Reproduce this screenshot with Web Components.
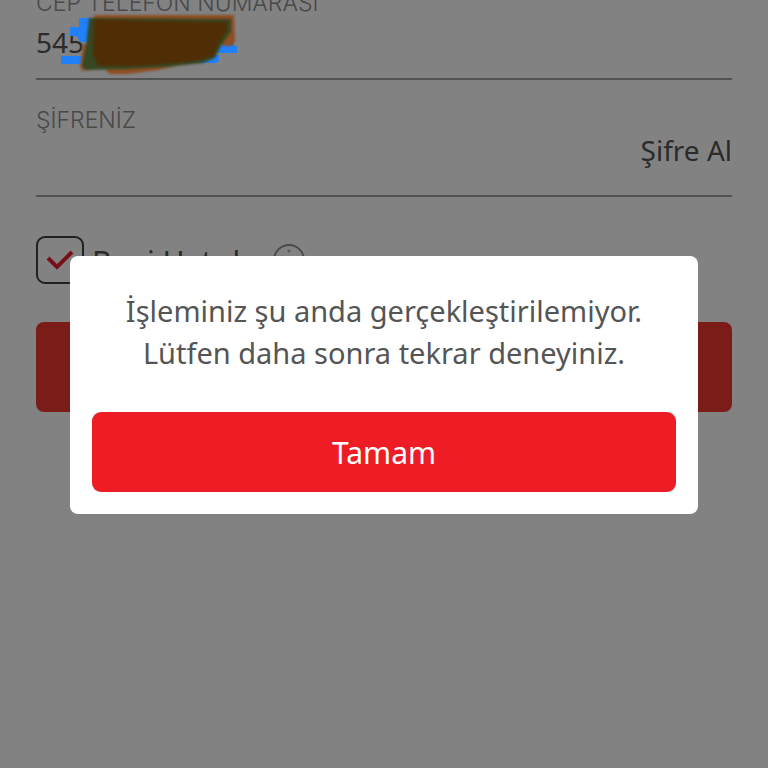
<!DOCTYPE html>
<html lang="tr">
<head>
<meta charset="utf-8">
<meta name="viewport" content="width=device-width, initial-scale=1">
<title>Giriş</title>
<style>
  body {
    margin: 0;
    min-height: 100vh;
    overflow: hidden;
    background: #fff;
    color: #555;
    font-family: "Noto Sans", "Open Sans", sans-serif;
    font-size: 28px;
  }
</style>
</head>
<body>
<login-form></login-form>
<alert-dialog action="Tamam">
  İşleminiz şu anda gerçekleştirilemiyor.<br>Lütfen daha sonra tekrar deneyiniz.
</alert-dialog>
<marker-scribble></marker-scribble>

<script>
class FormField extends HTMLElement {
  constructor() {
    super();
    this.attachShadow({ mode: 'open' });
    this.shadowRoot.innerHTML = `
      <style>
        :host {
          display: block;
          border-bottom: 2px solid #a4a4a4;
        }
        label {
          display: block;
          font: 300 23px/26px Inter, "Liberation Sans", sans-serif;
          color: #909090;
        }
        .row {
          display: flex;
          align-items: flex-start;
          height: 62px;
        }
        input {
          flex: 1;
          min-width: 0;
          height: 52px;
          padding: 0;
          border: 0;
          outline: 0;
          background: none;
          color: inherit;
          font: inherit;
        }
      </style>
      <label for="value"></label>
      <div class="row">
        <input id="value">
        <slot></slot>
      </div>
    `;
  }

  connectedCallback() {
    const input = this.shadowRoot.querySelector('input');
    this.shadowRoot.querySelector('label').textContent = this.getAttribute('label');
    input.type = this.getAttribute('type') || 'text';
    input.value = this.getAttribute('value') || '';
  }
}

class CheckOption extends HTMLElement {
  constructor() {
    super();
    this.attachShadow({ mode: 'open' });
    this.shadowRoot.innerHTML = `
      <style>
        :host {
          display: flex;
          align-items: center;
          gap: 16px;
          font-size: 30px;
        }
        label {
          display: flex;
          align-items: center;
          gap: 8px;
          line-height: 44px;
        }
        slot {
          display: block;
          padding-top: 4px;
        }
        .box {
          display: grid;
          width: 48px;
          height: 48px;
        }
        .box > * {
          grid-area: 1 / 1;
        }
        input {
          appearance: none;
          margin: 0;
          border: 2px solid #404040;
          border-radius: 9px;
        }
        svg {
          display: block;
          pointer-events: none;
        }
        input:not(:checked) + svg {
          visibility: hidden;
        }
        button {
          padding: 0;
          border: 0;
          background: none;
        }
      </style>
      <label>
        <span class="box">
          <input type="checkbox" checked>
          <svg width="48" height="48" viewBox="0 0 48 48" fill="none" stroke="#ee1d35" stroke-width="4">
            <path d="M12 22l9 9 15-15"/>
          </svg>
        </span>
        <slot></slot>
      </label>
      <button type="button" aria-label="Bilgi">
        <svg width="32" height="32" viewBox="0 0 32 32" fill="none" stroke="#929292" stroke-width="2">
          <circle cx="16" cy="16" r="15"/>
          <path d="M16 14v9"/>
          <circle cx="16" cy="7" r="1" stroke-width="1"/>
        </svg>
      </button>
    `;
  }
}

class LoginForm extends HTMLElement {
  constructor() {
    super();
    this.attachShadow({ mode: 'open' });
    this.shadowRoot.innerHTML = `
      <style>
        :host {
          display: block;
          padding: 0 36px;
        }
        form {
          display: flex;
          flex-direction: column;
          /* scrolled a little, the first label runs under the top edge */
          margin-top: -10px;
        }
        form-field + form-field {
          margin-top: 27px;
        }
        a {
          color: inherit;
          text-decoration: none;
          line-height: 34px;
        }
        check-option {
          margin-top: 39px;
        }
        .submit {
          height: 90px;
          margin-top: 38px;
          border: 0;
          border-radius: 8px;
          background: #f1372f;
        }
      </style>
      <form>
        <form-field label="CEP TELEFON NUMARASI" type="tel" value="545"></form-field>
        <form-field label="ŞİFRENİZ" type="password"><a href="#">Şifre Al</a></form-field>
        <check-option>Beni Hatırla</check-option>
        <button class="submit" type="button" aria-label="Giriş"></button>
      </form>
    `;
  }
}

class AlertDialog extends HTMLElement {
  constructor() {
    super();
    this.attachShadow({ mode: 'open' });
    this.shadowRoot.innerHTML = `
      <style>
        :host {
          position: fixed;
          inset: 0;
          display: flex;
          align-items: center;
          padding: 2px 70px 0;
          background: rgba(0, 0, 0, .49);
        }
        .panel {
          flex: 1;
          padding: 34px 22px 22px;
          border-radius: 8px;
          background: #fff;
          text-align: center;
        }
        p {
          margin: 0 0 38px;
          font-size: 29px;
          line-height: 42px;
        }
        button {
          display: block;
          width: 100%;
          height: 80px;
          border: 0;
          border-radius: 9px;
          background: #ee1d25;
          color: #fff;
          font: inherit;
          font-size: 30px;
        }
      </style>
      <div class="panel" role="alertdialog" aria-modal="true" aria-describedby="message">
        <p id="message"><slot></slot></p>
        <button type="button"></button>
      </div>
    `;
  }

  connectedCallback() {
    const button = this.shadowRoot.querySelector('button');
    button.textContent = this.getAttribute('action');
    button.addEventListener('click', () => this.remove());
  }
}

// Marker strokes hiding the rest of the phone number
class MarkerScribble extends HTMLElement {
  constructor() {
    super();
    this.attachShadow({ mode: 'open' });
    this.shadowRoot.innerHTML = `
      <style>
        :host {
          position: absolute;
          top: 10px;
          left: 56px;
          pointer-events: none;
        }
        svg {
          display: block;
        }
        .soft {
          filter: blur(1px);
        }
      </style>
      <svg width="184" height="70" viewBox="56 10 184 70" aria-hidden="true">
        <path fill="#2080f8" d="M79 18h12v24H80l-3-6h-7v-9h9zM61 56h24v8H61zM222 43h12v3h3v7h-20v-7h5zM180 63l20-8h19v5l-2 3h-32z"/>
        <g class="soft">
          <path fill="#8f4e22" d="M94 15h140l1 26-3 5-16-1-4 13-18 4-36 8-30 4h-18l-6-6-22 3-2-5 3-22h5z"/>
          <path fill="#364723" d="M89 18l142 1v13l-7 9-3 5-6 12-12 5-37 4-40 2-40 1-4-4 4-20z"/>
          <path fill="#4f2e05" d="M94 19l60 2 73 1v9l-8 12-6 14-24 5-50 4H98l-5-11z"/>
        </g>
      </svg>
    `;
  }
}

window.customElements.define('form-field', FormField);
window.customElements.define('check-option', CheckOption);
window.customElements.define('login-form', LoginForm);
window.customElements.define('alert-dialog', AlertDialog);
window.customElements.define('marker-scribble', MarkerScribble);
</script>
</body>
</html>
